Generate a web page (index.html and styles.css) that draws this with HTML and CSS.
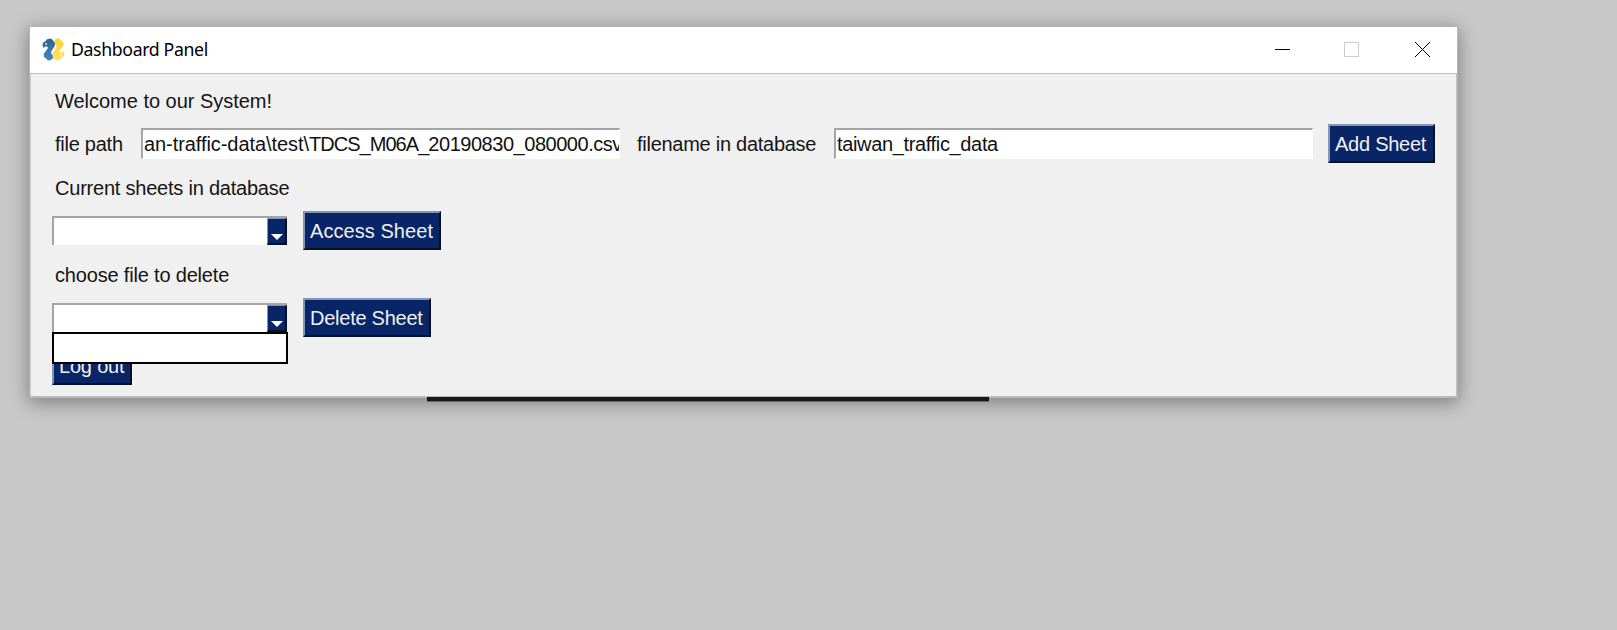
FILE: index.html
```html
<!DOCTYPE html>
<html lang="en">
<head>
<meta charset="utf-8">
<title>Dashboard Panel</title>
<link rel="stylesheet" href="styles.css">
</head>
<body>
<div class="backdrop-strip"></div>
<main class="window">
  <header class="titlebar">
    <svg class="logo" viewBox="0 0 24 24" width="23" height="23">
      <defs>
        <linearGradient id="blue" x1="0" y1="0" x2="0" y2="1"><stop offset="0" stop-color="#2f638f"/><stop offset="1" stop-color="#4288c0"/></linearGradient>
        <linearGradient id="gold" x1="0" y1="1" x2="0" y2="0"><stop offset="0" stop-color="#ffd02e"/><stop offset="1" stop-color="#ffe36b"/></linearGradient>
      </defs>
      <path fill="url(#blue)" d="M.5 7Q.5 4.500 3.500 3.500Q5 .5 8 .5Q10.500 .5 11.500 2.500Q14 4.500 13.600 7Q13.300 9.300 10.500 12.500Q8.800 15 9.800 16.500L11.800 18.500Q12.500 21 10.500 22Q9 23.700 7 23.500Q5 23.500 4.500 21.500Q1.500 20.300 1.800 17.500Q2 15.500 4.500 13Q6.800 10.800 6 9.300L4.500 8.600 1.500 10.200Q.5 9 .5 7Z"/>
      <circle cx="4.200" cy="6.200" r=".9" fill="#fff"/>
      <g transform="rotate(180 12 12)">
        <path fill="url(#gold)" d="M.5 7Q.5 4.500 3.500 3.500Q5 .5 8 .5Q10.500 .5 11.500 2.500Q13.300 4.500 13 7Q12.600 9.300 10 12.500Q8.300 15 9.300 16.500L10.800 18.500Q11.500 21 10.500 22Q9 23.700 7 23.500Q5 23.500 4.500 21.500Q1.500 20.300 1.300 17.500Q1.500 15.500 4 13Q6.300 10.800 6 9.300L4.500 8.600 1.500 10.200Q.5 9 .5 7Z"/>
        <circle cx="4.200" cy="6.200" r=".9" fill="#fff"/>
      </g>
    </svg>
    <h1 class="title">Dashboard Panel</h1>
    <svg class="controls" viewBox="0 0 156 16" width="156" height="16" fill="none" shape-rendering="crispEdges">
      <path d="M0 7.500H15" stroke="#000"/>
      <path d="M69.500 .5H83.500V14.500H69.500Z" stroke="#ccc"/>
      <path d="M140 0 155 15M155 0 140 15" stroke="#000" shape-rendering="auto"/>
    </svg>
  </header>
  <section class="panel">
    <div class="row"><span class="label welcome">Welcome to our System!</span></div>
    <div class="row">
      <span class="label path-label">file path</span>
      <div class="field path-value"><span class="folder">an-traffic-data\test\</span><span class="prefix">TDCS_M06A_</span>20190830_080000.csv</div>
      <span class="label name-label">filename in database</span>
      <div class="field name-value">taiwan_traffic_data</div>
      <button class="button add">Add Sheet</button>
    </div>
    <div class="row"><span class="label current">Current sheets in database</span></div>
    <div class="row">
      <div class="combo"><span class="arrow"></span></div>
      <button class="button access">Access Sheet</button>
    </div>
    <div class="row"><span class="label choose">choose file to delete</span></div>
    <div class="row">
      <div class="combo"><span class="arrow"></span><div class="dropdown"></div></div>
      <button class="button delete">Delete Sheet</button>
    </div>
    <div class="row last"><button class="button logout">Log out</button></div>
  </section>
</main>
</body>
</html>
```
FILE: styles.css
```css
* { box-sizing: border-box; }
body {
  margin: 0;
  height: 630px;
  padding: 26px 0 0 29px;
  overflow: hidden;
  background: #c8c8c8;
  font-family: "Liberation Sans", Arial, sans-serif;
}
.backdrop-strip {
  position: absolute;
  z-index: 1;
  left: 427px;
  top: 397px;
  width: 562px;
  height: 5px;
  background: #181818;
  border-bottom: 1px solid #686868;
}
.window {
  width: 1429px;
  height: 372px;
  border: 1px solid #b4b4b4;
  border-bottom: 2px solid #b9b9b9;
  background: #f0f0f0;
  box-shadow: 0 4px 17px 1px rgba(0, 0, 0, .36);
}
.titlebar {
  display: flex;
  align-items: center;
  height: 47px;
  padding: 0 26px 1px 12px;
  background: #fff;
  border-bottom: 1px solid #bdbdbd;
}
.logo { margin-top: -1px; }
.title {
  margin: -2px 0 0 6px;
  font: 400 17.7px/24px "Noto Sans", sans-serif;
  letter-spacing: -.36px;
  color: #000;
}
.controls { margin-left: auto; }
.panel {
  height: 322px;
  padding: 4px 0 0 21px;
  border-left: 1px solid #cacaca;
  border-right: 1px solid #c0c0c0;
}
.row {
  display: flex;
  align-items: center;
  height: 43.5px;
}
.last { height: 52px; }
.label, .field, .button {
  font-size: 20px;
  line-height: 24px;
  white-space: pre;
}
.label { color: #151515; padding: 2px 0 0 3px; }
.welcome { letter-spacing: -.02px; }
.path-label { width: 89px; letter-spacing: -.25px; }
.name-label { width: 214px; padding-left: 17px; letter-spacing: -.27px; }
.current { letter-spacing: -.22px; }
.choose { letter-spacing: -.18px; }
.field {
  width: 479px;
  height: 31px;
  padding: 2px 0 0 1px;
  overflow: hidden;
  background: #fff;
  color: #111;
  border: solid #fff;
  border-width: 2px 1px 1px 2px;
  border-top-color: #a5a5a5;
  border-left-color: #a5a5a5;
}
.path-value { letter-spacing: -.47px; }
.folder { letter-spacing: -.07px; }
.prefix { letter-spacing: -.95px; }
.name-value { letter-spacing: -.35px; }
.button {
  flex: none;
  height: 39px;
  padding: 2px 0 0 5px;
  text-align: left;
  font-family: inherit;
  color: #f0f0f0;
  background: #082567;
  border: solid;
  border-width: 2px;
  border-color: #8494b5 #0a1020 #0a1020 #8494b5;
}
.add { width: 107px; margin-left: 15px; letter-spacing: -.25px; }
.access { width: 138px; margin-left: 16px; letter-spacing: .06px; }
.delete { width: 128px; margin-left: 16px; letter-spacing: -.25px; }
.logout { width: 80px; letter-spacing: -.2px; }
.combo {
  position: relative;
  display: flex;
  justify-content: flex-end;
  width: 235px;
  height: 29px;
  background: #fff;
  border: solid #a5a5a5;
  border-width: 2px 0 0 2px;
}
.arrow {
  display: flex;
  justify-content: center;
  align-items: flex-end;
  width: 20px;
  height: 27px;
  padding-bottom: 3px;
  background: #082567;
  border: solid;
  border-width: 1px 2px 2px 1px;
  border-color: #8494b5 #0a1020 #0a1020 #8494b5;
}
.arrow::after {
  content: "";
  border: solid transparent;
  border-width: 6px 6px 0;
  border-top-color: #fff;
}
.dropdown {
  position: absolute;
  z-index: 2;
  top: 27px;
  left: -2px;
  width: 236px;
  height: 32px;
  background: #fff;
  border: 2px solid #000;
}
```
